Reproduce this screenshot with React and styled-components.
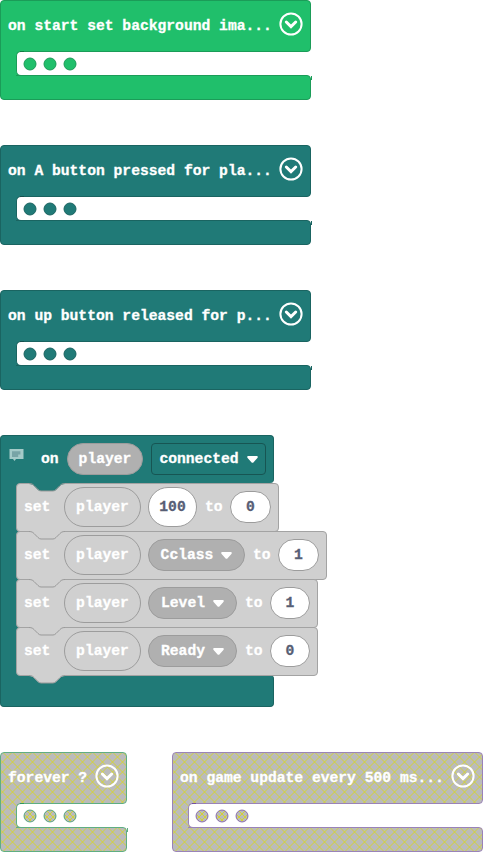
import React from 'react';
import styled, { createGlobalStyle, css } from 'styled-components';

const GlobalStyle = createGlobalStyle`
  body {
    margin: 0;
    background: #fff;
    overflow: hidden;
  }
  * { box-sizing: border-box; }
`;

const themes = {
  green: { fill: '#20bf6b', edge: '#1b9c58', mark: '#107c41' },
  teal: { fill: '#207a77', edge: '#1a6461', mark: '#154f4d' },
  offGreen: { edge: '#5fae83', mark: '#2f9560', hatched: true },
  offPurple: { edge: '#9a83b8', mark: '#7350a0', hatched: true },
};

const hatch =
  "url(\"data:image/svg+xml,%3Csvg xmlns='http://www.w3.org/2000/svg' width='10' height='10' viewBox='0 0 10 10'%3E%3Crect width='10' height='10' fill='%23bbb'/%3E%3Cpath d='M-7.5 -10L12.5 10M-7.5 0L12.5 20M12.5 -10L-7.5 10M22.5 -10L-7.5 20' stroke='%23d6d626' stroke-width='.9'/%3E%3C/svg%3E\")";

const surface = css`
  background-color: ${(p) => p.$tone.fill || 'transparent'};
  background-image: ${(p) => (p.$tone.hatched ? hatch : 'none')};
  background-origin: border-box;
  background-size: 10px 10px;
  background-position: 0 ${(p) => p.$shift || 0}px;
`;

const Workspace = styled.main`
  display: flex;
  flex-direction: column;
  width: 483px;
  height: 852px;
  gap: 45px;
  font: bold 14.67px/18px 'Liberation Mono', monospace;
  -webkit-text-stroke: 0.3px currentColor;
  color: #fff;
  white-space: pre;
`;

const BottomRow = styled.div`
  display: flex;
  justify-content: space-between;
`;

const Block = styled.section`
  width: ${(p) => p.$width}px;
  flex: none;
`;

const Header = styled.header`
  ${surface}
  display: flex;
  align-items: center;
  justify-content: space-between;
  height: ${(p) => p.$height || 52}px;
  padding: 0 7px 4px;
  border: 1px solid ${(p) => p.$tone.edge};
  border-radius: 4px 4px 4px 0;
`;

const Title = styled.span`
  padding-top: 3px;
`;

const Middle = styled.div`
  ${surface}
  margin-top: -1px;
  border-left: 1px solid ${(p) => p.$tone.edge};
  width: 20px;
  height: 25px;
`;

const Slot = styled.div`
  position: relative;
  display: flex;
  align-items: center;
  gap: 6px;
  width: ${(p) => p.$width - 20}px;
  height: 25px;
  margin-left: 15px;
  padding: 1px 0 0 6px;
  background: #fff;
  border: 1px solid ${(p) => p.$tone.edge};
  border-right: 0;
  border-radius: 5px 0 0 5px;

  &::before {
    content: '';
    position: absolute;
    left: 3px;
    top: -1px;
    width: 4px;
    height: 1px;
    background: ${(p) => p.$tone.mark};
  }
`;

const Dot = styled.svg`
  flex: none;
  width: 14px;
  height: 14px;
`;

const Footer = styled.footer`
  ${surface}
  position: relative;
  height: ${(p) => p.$height || 24}px;
  margin-top: -1px;
  border: 1px solid ${(p) => p.$tone.edge};
  border-radius: 0 4px 4px 4px;
`;

const FooterJoin = styled.div`
  ${surface}
  width: 15px;
  height: 1px;
  margin-top: -1px;

  &::after {
    content: '';
    position: absolute;
    right: -2px;
    top: 0;
    width: 1px;
    height: 4px;
    background: ${(p) => p.$tone.edge};
  }
`;

const ChevronIcon = styled.svg`
  flex: none;
  width: 24px;
  height: 24px;
`;

function Chevron() {
  return (
    <ChevronIcon viewBox="0 0 24 24" fill="none" stroke="#fff">
      <circle cx="12" cy="12" r="10.6" strokeWidth="2" />
      <path d="M7.3 10l4.7 4.6L16.7 10" strokeWidth="3" strokeLinecap="round" strokeLinejoin="miter" />
    </ChevronIcon>
  );
}

function SlotDot({ tone }) {
  return (
    <Dot viewBox="0 0 14 14">
      <circle cx="7" cy="7" r="6" fill={tone.fill || '#bbb'} />
      {tone.hatched && <path d="M2 6L8 12M4 2L12 10M10 2L2 10M12 6L6 12" stroke="#d6d626" strokeWidth=".9" />}
      <circle cx="7" cy="7" r="6" fill="none" stroke={tone.hatched ? tone.mark : tone.edge} strokeOpacity={tone.hatched ? 0.75 : 1} />
    </Dot>
  );
}

function CollapsedBlock({ tone: name, width, label }) {
  const tone = themes[name];
  return (
    <Block $width={width}>
      <Header $tone={tone}>
        <Title>{label}</Title>
        <Chevron />
      </Header>
      <Middle $tone={tone} $shift={-51}>
        <Slot $tone={tone} $width={width}>
          <SlotDot tone={tone} />
          <SlotDot tone={tone} />
          <SlotDot tone={tone} />
        </Slot>
      </Middle>
      <Footer $tone={tone} $height={25} $shift={-75}>
        <FooterJoin $tone={tone} $shift={-75} />
      </Footer>
    </Block>
  );
}

const EventHeader = styled(Header)`
  justify-content: flex-start;
  padding: 0 0 1px 8px;
  border-bottom: 0;
`;

const CommentIcon = styled.svg`
  flex: none;
  width: 15px;
  height: 12px;
  margin: 0 17px 8px 0;
`;

const OnLabel = styled.span`
  flex: none;
  width: 26px;
`;

const Pill = styled.span`
  display: flex;
  align-items: center;
  justify-content: center;
  flex: none;
  width: ${(p) => p.$width}px;
  height: ${(p) => (p.$tall ? 40 : 32)}px;
  margin-right: ${(p) => p.$after ?? 8}px;
  border: 1px solid #9c9c9c;
  border-radius: 20px;
  background: ${(p) => p.$fill || 'transparent'};
  color: ${(p) => (p.$ink ? '#575e75' : '#fff')};
`;

const Dropdown = styled(Pill)`
  gap: 8px;
  border-color: ${(p) => (p.$square ? '#175553' : '#9c9c9c')};
  border-radius: ${(p) => (p.$square ? 4 : 20)}px;
`;

const ArrowIcon = styled.svg`
  flex: none;
  width: 11px;
  height: 7px;
`;

function Arrow() {
  return (
    <ArrowIcon viewBox="0 0 11 7">
      <path d="M1.3 0h8.4c1.1 0 1.4 1.2.7 1.9L6.6 6.3c-.6.7-1.6.7-2.2 0L.6 1.9C-.1 1.2.2 0 1.3 0z" fill="#fff" />
    </ArrowIcon>
  );
}

const EventBody = styled.div`
  background: linear-gradient(${themes.teal.fill}, ${themes.teal.fill}) 0 0 / 20px 100% no-repeat;
  border-left: 1px solid ${themes.teal.edge};
  padding-left: 15px;
`;

const Statement = styled.div`
  position: relative;
  display: flex;
  align-items: center;
  width: ${(p) => p.$width}px;
  height: 49px;
  margin-bottom: -1px;
  padding: 0 0 1px 7px;
  background: #d0d0d0;
  border: 1px solid #a3a3a3;
  border-radius: 4px;
`;

const SetLabel = styled.span`
  flex: none;
  width: 40px;
`;

const ToLabel = styled.span`
  flex: none;
  width: 25px;
`;

const NotchIcon = styled.svg`
  position: absolute;
  left: 11px;
  top: ${(p) => (p.$bottom ? 47 : -1)}px;
  width: 38px;
  height: 10px;
`;

function Notch({ fill, bottom }) {
  return (
    <NotchIcon $bottom={bottom} viewBox="0 0 38 10">
      <path d="M1 0H37V1C34 1 33 2 32 3L28 7Q27 8 25 8H13Q11 8 10 7L6 3C5 2 4 1 1 1z" fill={fill} />
      <path d="M1 .5C4 .5 5 1.5 6 2.5L10 6.5Q11.5 8 13 8H25Q26.5 8 28 6.5L32 2.5C33 1.5 34 .5 37 .5" fill="none" stroke="#999" />
    </NotchIcon>
  );
}

const statements = [
  { width: 263, number: '100', value: '0' },
  { width: 311, variable: 'Cclass', fieldWidth: 97, value: '1' },
  { width: 302, variable: 'Level', fieldWidth: 89, value: '1' },
  { width: 302, variable: 'Ready', fieldWidth: 89, value: '0' },
];

const EventFooter = styled(Footer)`
  height: 32px;
  margin-top: 0;
  border-top: 0;
  z-index: -1;
`;

function ConnectedBlock() {
  return (
    <Block $width={274}>
      <EventHeader $tone={themes.teal} $height={48}>
        <CommentIcon viewBox="0 0 15 12">
          <path d="M.5 0h14v10H7l-1.5 2L4 10H.5z" fill="#a4cac8" />
          <path d="M3 2.2h8.4v3.2H9.2v2.5H3z" fill="#78a4a6" />
        </CommentIcon>
        <OnLabel>on</OnLabel>
        <Pill $width={76} $fill="#b0b0b0">player</Pill>
        <Dropdown $width={115} $square>connected<Arrow /></Dropdown>
      </EventHeader>
      <EventBody>
        {statements.map((s, i) => (
          <Statement key={s.variable || s.number} $width={s.width}>
            <Notch fill={i ? '#d0d0d0' : themes.teal.fill} />
            <SetLabel>set</SetLabel>
            <Pill $width={77} $tall $after={7}>player</Pill>
            {s.number ? (
              <Pill $width={49} $tall $fill="#fff" $ink>{s.number}</Pill>
            ) : (
              <Dropdown $width={s.fieldWidth} $fill="#b0b0b0">{s.variable}<Arrow /></Dropdown>
            )}
            <ToLabel>to</ToLabel>
            <Pill $width={s.fieldWidth === 89 ? 40 : 41} $fill="#fff" $ink>{s.value}</Pill>
            {i === statements.length - 1 && <Notch fill="#d0d0d0" bottom />}
          </Statement>
        ))}
      </EventBody>
      <EventFooter $tone={themes.teal} />
    </Block>
  );
}

export default function App() {
  return (
    <>
      <GlobalStyle />
      <Workspace>
        <CollapsedBlock tone="green" width={311} label="on start set background ima..." />
        <CollapsedBlock tone="teal" width={311} label="on A button pressed for pla..." />
        <CollapsedBlock tone="teal" width={311} label="on up button released for p..." />
        <ConnectedBlock />
        <BottomRow>
          <CollapsedBlock tone="offGreen" width={127} label="forever ?" />
          <CollapsedBlock tone="offPurple" width={311} label="on game update every 500 ms..." />
        </BottomRow>
      </Workspace>
    </>
  );
}
